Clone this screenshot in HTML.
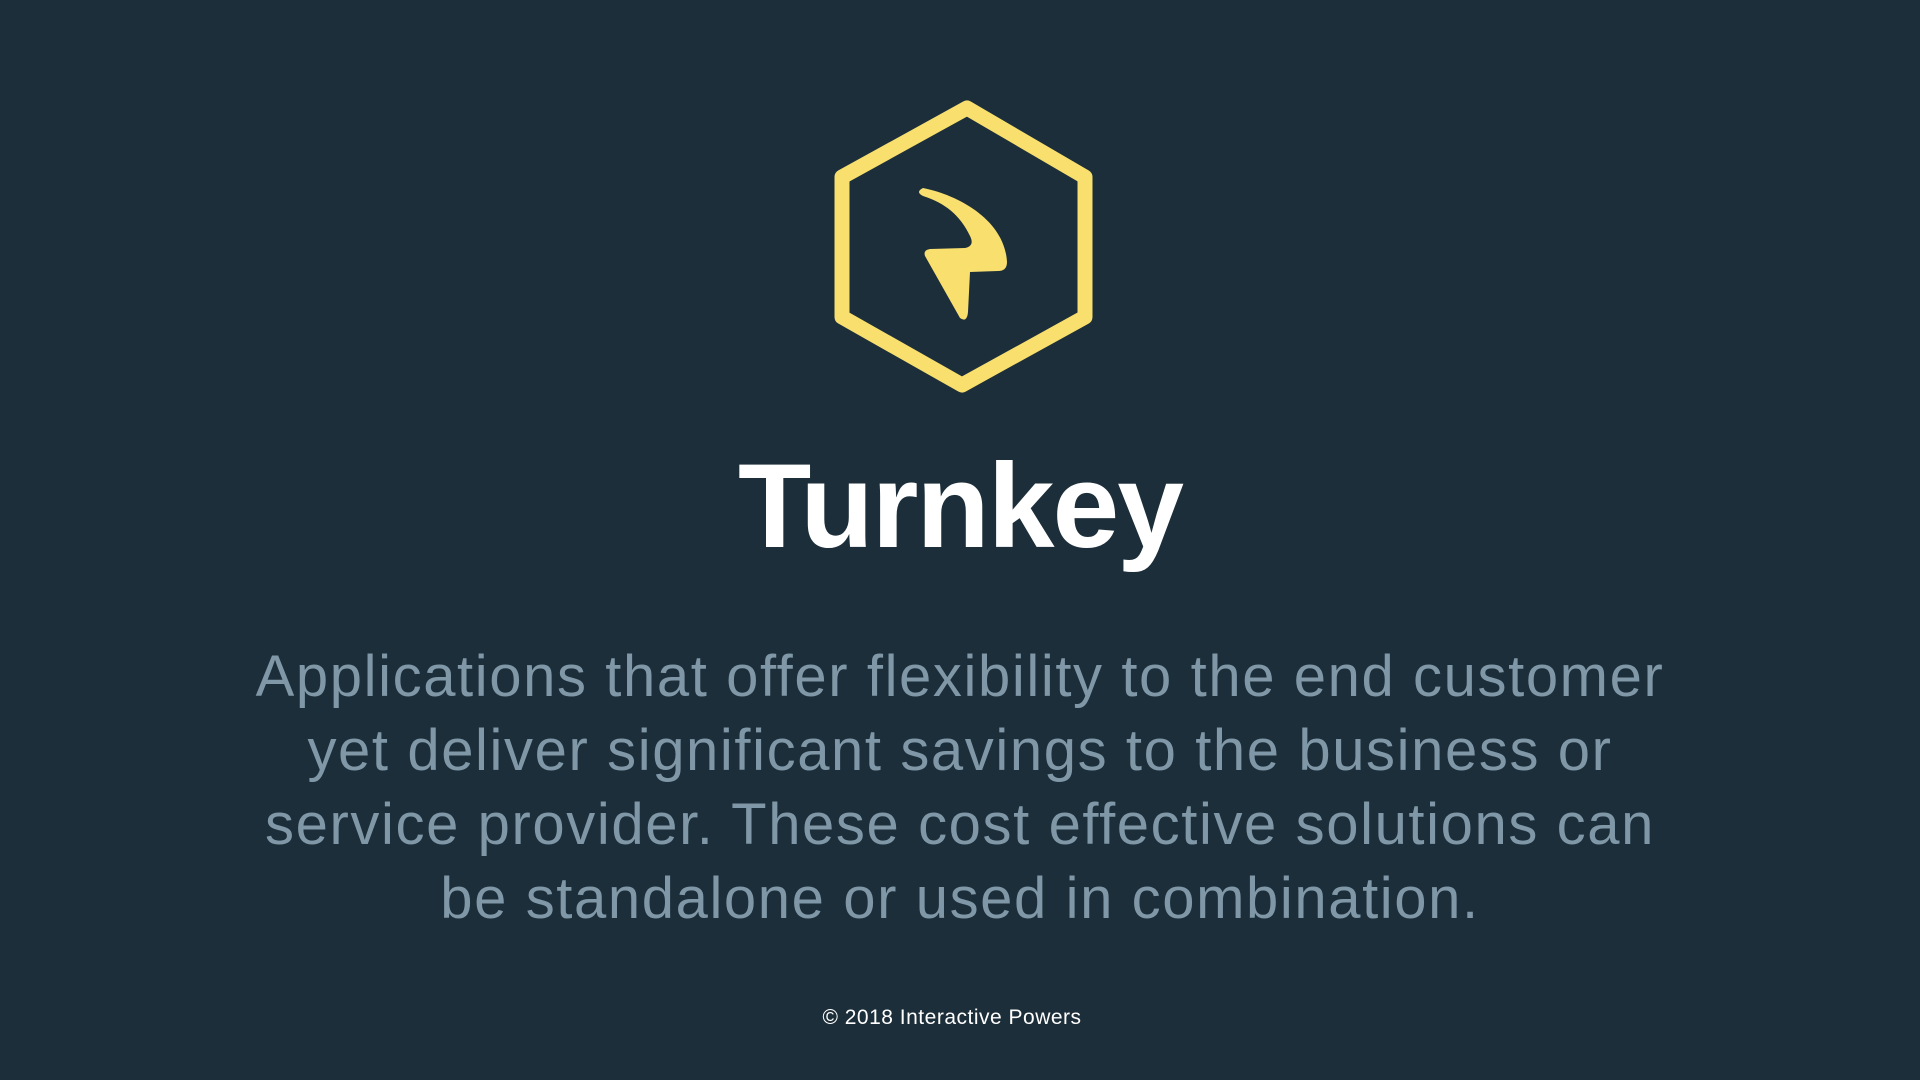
<!DOCTYPE html>
<html><head><meta charset="utf-8"><style>
html,body{margin:0;padding:0;}
body{width:1920px;height:1080px;background:#1c2e39;position:relative;overflow:hidden;font-family:"Liberation Sans",sans-serif;}
.t{position:absolute;left:0;width:1920px;text-align:center;white-space:nowrap;}
h1{margin:0;font-size:120px;font-weight:bold;color:#fff;top:436px;line-height:140px;letter-spacing:-2px;}
.p{font-size:58px;color:#7f97a6;line-height:74px;letter-spacing:1.6px;}
.f{font-size:21px;color:#fff;top:1006px;line-height:24px;letter-spacing:0.5px;left:-8px;}
</style></head><body>
<svg width="1920" height="1080" style="position:absolute;left:0;top:0">
<polygon points="967,108 1085,177 1085,317 962,385 842,317 842,177" fill="none" stroke="#f8df6e" stroke-width="15" stroke-linejoin="round"/>
<path d="M923,188 C962,196 1005,222 1007,262 Q1007,271 998,271 L970,272 L968,312 Q967,323 960,318 L925,256 Q923,250 930,249 L965,248 Q975,246 970,236 C960,215 945,203 923,196 Q915,192 923,188 Z" fill="#f8df6e"/>
</svg>
<h1 class="t">Turnkey</h1>
<div class="t p" style="top:640px">Applications that offer flexibility to the end customer</div>
<div class="t p" style="top:714px">yet deliver significant savings to the business or</div>
<div class="t p" style="top:788px">service provider. These cost effective solutions can</div>
<div class="t p" style="top:862px">be standalone or used in combination.</div>
<div class="t f">© 2018 Interactive Powers</div>
</body></html>
